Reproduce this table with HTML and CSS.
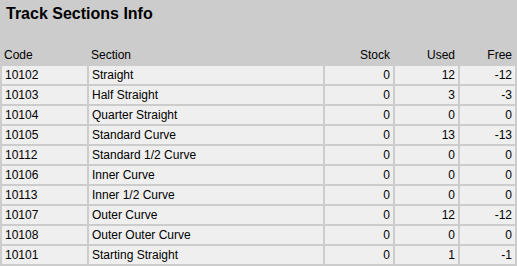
FILE: index.html
```html
<!DOCTYPE html>
<html>
<head>
<meta charset="utf-8">
<link rel="stylesheet" href="styles.css">
</head>
<body>
<h1 class="title">Track Sections Info</h1>
<table class="info">
<thead>
<tr><th class="c-code">Code</th><th class="c-sec">Section</th><th class="num c-stock">Stock</th><th class="num c-used">Used</th><th class="num c-free">Free</th></tr>
</thead>
<tbody>
<tr><td>10102</td><td>Straight</td><td class="num">0</td><td class="num">12</td><td class="num">-12</td></tr>
<tr><td>10103</td><td>Half Straight</td><td class="num">0</td><td class="num">3</td><td class="num">-3</td></tr>
<tr><td>10104</td><td>Quarter Straight</td><td class="num">0</td><td class="num">0</td><td class="num">0</td></tr>
<tr><td>10105</td><td>Standard Curve</td><td class="num">0</td><td class="num">13</td><td class="num">-13</td></tr>
<tr><td>10112</td><td>Standard 1/2 Curve</td><td class="num">0</td><td class="num">0</td><td class="num">0</td></tr>
<tr><td>10106</td><td>Inner Curve</td><td class="num">0</td><td class="num">0</td><td class="num">0</td></tr>
<tr><td>10113</td><td>Inner 1/2 Curve</td><td class="num">0</td><td class="num">0</td><td class="num">0</td></tr>
<tr><td>10107</td><td>Outer Curve</td><td class="num">0</td><td class="num">12</td><td class="num">-12</td></tr>
<tr><td>10108</td><td>Outer Outer Curve</td><td class="num">0</td><td class="num">0</td><td class="num">0</td></tr>
<tr><td>10101</td><td>Starting Straight</td><td class="num">0</td><td class="num">1</td><td class="num">-1</td></tr>
</tbody>
</table>
</body>
</html>
```
FILE: styles.css
```css
html, body {
  margin: 0;
  padding: 0;
  background: #cccccc;
  font-family: "Liberation Sans", Arial, sans-serif;
  color: #000;
}
.title {
  margin: 0;
  padding: 4px 6px 0;
  font-size: 16px;
  line-height: 19px;
  font-weight: bold;
  height: 44px;
  box-sizing: border-box;
}
.info {
  width: 517px;
  border-collapse: separate;
  border-spacing: 2px;
  table-layout: fixed;
  margin: 0;
}
.info th, .info td {
  font-size: 12px;
  line-height: 14px;
  height: 18px;
  padding: 2px 3px;
  box-sizing: border-box;
  text-align: left;
  font-weight: normal;
  white-space: nowrap;
}
.info th { padding-left: 2px; }
.info td { background: #efefef; }
.info .num { text-align: right; }
.c-code { width: 85px; }
.c-sec { width: 234px; }
.c-stock { width: 68px; }
.c-used { width: 63px; }
.c-free { width: 55px; }
```
